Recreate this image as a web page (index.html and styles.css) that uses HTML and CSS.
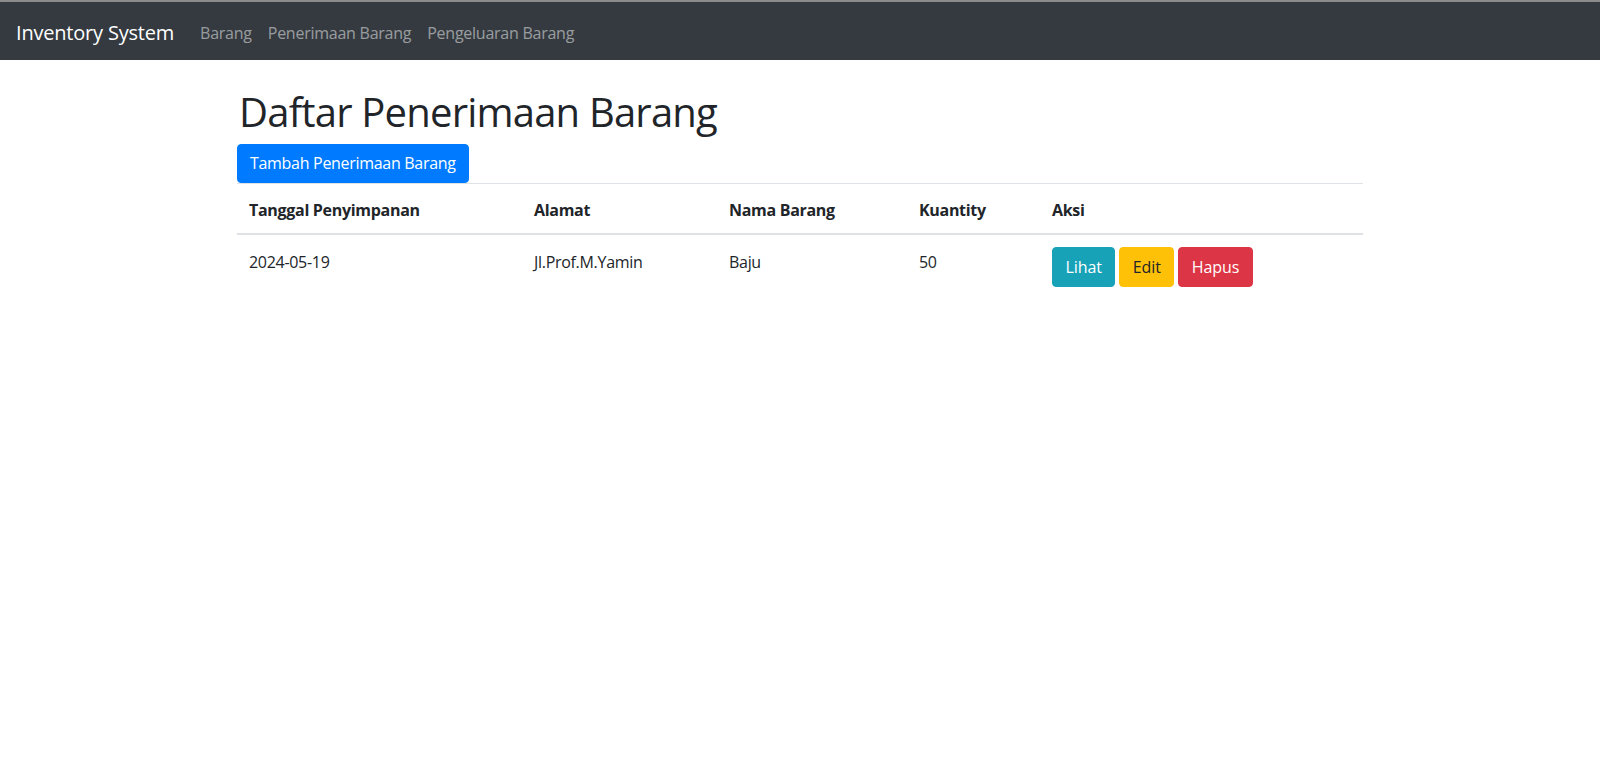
FILE: index.html
```html
<!DOCTYPE html>
<html lang="id">
<head>
<meta charset="utf-8">
<title>Inventory System</title>
<link rel="stylesheet" href="styles.css">
</head>
<body>
<div class="topline"></div>
<nav class="navbar">
  <a class="brand" href="#">Inventory System</a>
  <ul class="nav">
    <li><a class="nav-link" href="#">Barang</a></li>
    <li><a class="nav-link" href="#">Penerimaan Barang</a></li>
    <li><a class="nav-link" href="#">Pengeluaran Barang</a></li>
  </ul>
</nav>
<main class="container">
  <h1 class="title">Daftar Penerimaan Barang</h1>
  <a class="btn btn-primary" href="#">Tambah Penerimaan Barang</a>
  <table class="table">
    <thead>
      <tr>
        <th class="c1">Tanggal Penyimpanan</th>
        <th class="c2">Alamat</th>
        <th class="c3">Nama Barang</th>
        <th class="c4">Kuantity</th>
        <th class="c5">Aksi</th>
      </tr>
    </thead>
    <tbody>
      <tr>
        <td>2024-05-19</td>
        <td>Jl.Prof.M.Yamin</td>
        <td>Baju</td>
        <td>50</td>
        <td class="actions">
          <a class="btn btn-info" href="#">Lihat</a>
          <a class="btn btn-warning" href="#">Edit</a>
          <a class="btn btn-danger" href="#">Hapus</a>
        </td>
      </tr>
    </tbody>
  </table>
</main>
</body>
</html>
```
FILE: styles.css
```css
* { box-sizing: border-box; }
html, body { margin: 0; padding: 0; }
body {
  font-family: "Open Sans", "Noto Sans", "Liberation Sans", sans-serif;
  font-size: 16px;
  line-height: 1.5;
  color: #212529;
  background: #fff;
}
a { text-decoration: none; }

.topline { height: 2px; background: #8c8c8c; }

.navbar {
  height: 58px;
  background: #343a40;
  display: flex;
  align-items: center;
  padding: 3px 16px 0;
}
.brand {
  color: #fff;
  font-size: 20px;
  line-height: 30px;
  margin-right: 18px;
  letter-spacing: -0.2px;
}
.nav {
  list-style: none;
  margin: 0;
  padding: 0;
  display: flex;
}
.nav-link {
  display: block;
  padding: 8px;
  color: rgba(255, 255, 255, 0.5);
  letter-spacing: -0.25px;
}

.container {
  width: 1126px;
  margin: 0 auto;
  padding-top: 28px;
}
.title {
  margin: 0 0 8px 2px;
  font-size: 40px;
  font-weight: 400;
  line-height: 48px;
  letter-spacing: -0.8px;
}

.btn {
  display: inline-block;
  padding: 6px 12px;
  border: 1px solid transparent;
  border-radius: 4px;
  font-size: 16px;
  line-height: 25px;
  color: #fff;
  letter-spacing: -0.3px;
  vertical-align: middle;
}
.btn-primary { background: #007bff; border-color: #007bff; }
.btn-info { background: #17a2b8; border-color: #17a2b8; }
.btn-warning { background: #ffc107; border-color: #ffc107; color: #212529; }
.btn-danger { background: #dc3545; border-color: #dc3545; }

.table {
  width: 100%;
  border-collapse: collapse;
  margin-top: 0;
}
.table th, .table td {
  padding: 15px 12px 10px;
  text-align: left;
  vertical-align: top;
  border-top: 1px solid #dee2e6;
  letter-spacing: -0.3px;
}
.table thead th {
  padding: 14px 12px 11px;
  border-bottom: 2px solid #dee2e6;
  font-weight: 700;
}
.c1 { width: 285px; }
.c2 { width: 195px; }
.c3 { width: 190px; }
.c4 { width: 133px; }
.table .actions { padding-top: 12px; font-size: 0; }
.actions .btn { font-size: 16px; line-height: 26px; margin-right: 4px; letter-spacing: -0.1px; padding: 6px 12.5px; }
```
